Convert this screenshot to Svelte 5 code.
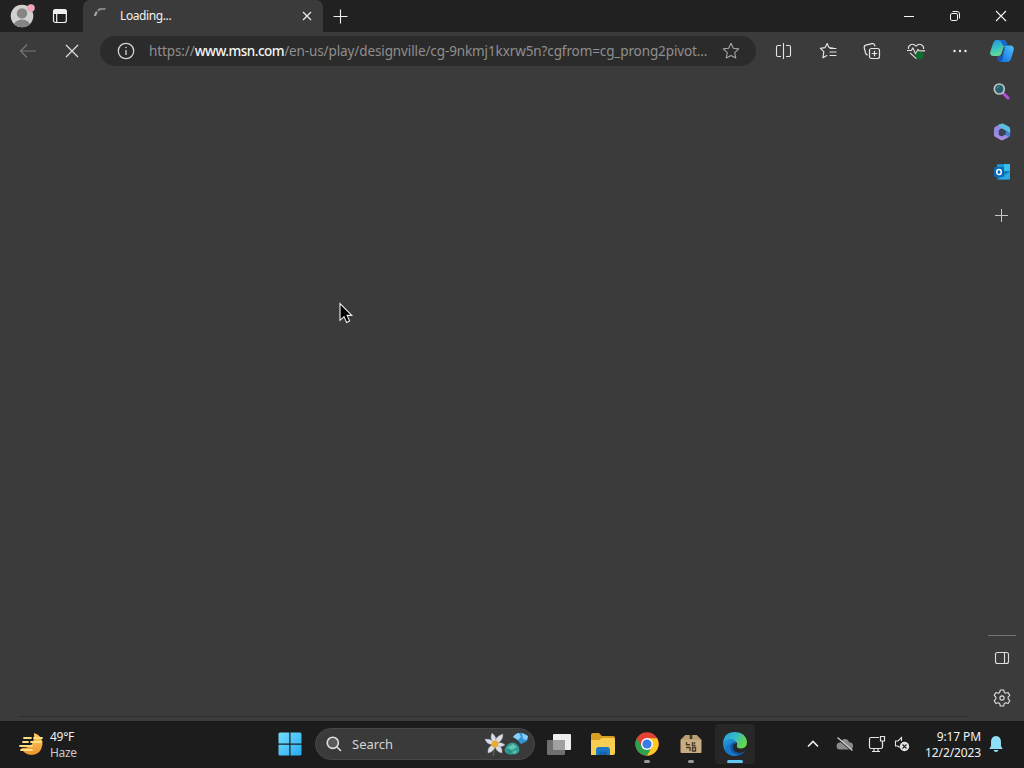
<script>
  const url = {
    scheme: 'https://',
    host: 'www.msn.com',
    path: '/en-us/play/designville/cg-9nkmj1kxrw5n?cgfrom=cg_prong2pivot...',
  };
  const weather = { temp: '49°F', text: 'Haze' };
  const clock = { time: '9:17 PM', date: '12/2/2023' };
</script>

<div class="desktop">
  <header class="titlebar">
    <button class="profile" aria-label="Profile">
      <svg width="28" height="28" viewBox="0 0 28 28">
        <defs><clipPath id="face"><circle cx="14" cy="14" r="11.3" /></clipPath></defs>
        <circle cx="14" cy="14" r="11.3" fill="#d0d0cf" />
        <g clip-path="url(#face)" fill="#858585">
          <circle cx="14" cy="11.4" r="5.2" />
          <ellipse cx="14" cy="23" rx="8" ry="5.4" />
        </g>
        <circle cx="23" cy="6" r="3.8" fill="#f0a6b5" />
      </svg>
    </button>
    <button class="tab-menu" aria-label="Tab actions">
      <svg width="16" height="16" viewBox="0 0 16 16" fill="none" stroke="#f0f0f0" stroke-width="1.2">
        <rect x="1.5" y="1.7" width="12.8" height="12.8" rx="2" />
        <path d="M1.7 3.5q0-1.6 1.8-1.6h9q1.8 0 1.8 1.6v1.8H1.7z" fill="#f0f0f0" />
        <path d="M4.7 5v9.5" />
      </svg>
    </button>
    <div class="tab">
      <svg class="spinner" width="16" height="16" viewBox="0 0 16 16" fill="none" stroke="#a4a4a4" stroke-width="2.2">
        <path d="M1 8A7.5 7.5 0 0 1 3 3.7" />
        <path d="M3.8 2.8A7.5 7.5 0 0 1 11.5 1" stroke="#858585" />
      </svg>
      <span class="tab-title">Loading...</span>
      <svg class="tab-close" width="10" height="10" viewBox="0 0 10 10" stroke="#eee" stroke-width="1.2">
        <path d="M1 1l8 8M9 1L1 9" />
      </svg>
    </div>
    <button class="new-tab" aria-label="New tab">
      <svg width="15" height="15" viewBox="0 0 15 15" stroke="#f0f0f0" stroke-width="1.1"><path d="M7.5 .5v14M.5 7.5h14" /></svg>
    </button>
    <div class="window-buttons">
      <button aria-label="Minimize">
        <svg width="12" height="12" viewBox="0 0 12 12" stroke="#f4f4f4"><path d="M1 6.5h10" /></svg>
      </button>
      <button aria-label="Restore">
        <svg width="12" height="12" viewBox="0 0 12 12" fill="none" stroke="#f4f4f4">
          <rect x="1.5" y="3.5" width="7" height="7" rx="1.4" />
          <path d="M3.5 1.5H8q2.5 0 2.5 2.5v4.5" />
        </svg>
      </button>
      <button aria-label="Close">
        <svg width="12" height="12" viewBox="0 0 12 12" stroke="#f4f4f4" stroke-width="1.1"><path d="M1 1l10 10M11 1L1 11" /></svg>
      </button>
    </div>
  </header>

  <nav class="toolbar">
    <button class="tool" aria-label="Back">
      <svg width="20" height="20" viewBox="0 0 20 20" fill="none" stroke="#777" stroke-width="1.2"><path d="M18 10H2.5M9 3.5L2.5 10l6.5 6.5" /></svg>
    </button>
    <button class="tool" aria-label="Stop">
      <svg width="16" height="16" viewBox="0 0 16 16" stroke="#e2e2e2" stroke-width="1.2"><path d="M2 2l12 12M14 2L2 14" /></svg>
    </button>
    <div class="address">
      <svg class="info" width="18" height="18" viewBox="0 0 18 18" fill="none" stroke="#d5d5d5" stroke-width="1.3">
        <circle cx="9" cy="9" r="7.7" />
        <path d="M9 8v5" />
        <circle cx="9" cy="5.6" r=".5" fill="#d5d5d5" stroke-width=".6" />
      </svg>
      <span class="url">{url.scheme}<b>{url.host}</b>{url.path}</span>
      <svg class="star" width="18" height="18" viewBox="0 0 18 18" fill="none" stroke="#a5a5a5" stroke-width="1.1" stroke-linejoin="round">
        <path d="M9 1.3l2.3 4.9 5.4.7-4 3.7 1.1 5.4L9 13.4 4.2 16l1.1-5.4-4-3.7 5.4-.7z" />
      </svg>
    </div>
    <div class="tools">
      <button class="tool" aria-label="Split screen">
        <svg width="18" height="18" viewBox="0 0 18 18" fill="none" stroke="#e4e4e4" stroke-width="1.1">
          <path d="M8.5 1v16M6 3.5H3Q1.5 3.5 1.5 5v8q0 1.5 1.5 1.5h3M11 3.5h3q1.5 0 1.5 1.5v8q0 1.5-1.5 1.5h-3" />
        </svg>
      </button>
      <button class="tool" aria-label="Favorites">
        <svg width="18" height="18" viewBox="0 0 18 18" fill="none" stroke="#e4e4e4" stroke-width="1.2" stroke-linejoin="round" stroke-linecap="round">
          <path d="M14 6.1L10 5.5 8.1 1.5 6.1 5.6l-4.7.8 3.4 3.2L4 15.8l3.8-2.2" />
          <path d="M11 6.5h6M11 10h6M11 13.5h6" />
        </svg>
      </button>
      <button class="tool" aria-label="Collections">
        <svg width="18" height="18" viewBox="0 0 18 18" fill="none" stroke="#e4e4e4" stroke-width="1.2">
          <rect x="6.5" y="6.5" width="10" height="10" rx="2" />
          <path d="M11.5 8.7v5.6M8.7 11.5h5.6" />
          <path d="M4.8 13Q3 12.8 2.5 11L1.3 6Q.8 3.7 2.8 3.2L9 1.7q2-.4 2.6 1.3l.4 1.4" />
        </svg>
      </button>
      <button class="tool" aria-label="Browser essentials">
        <svg width="18" height="18" viewBox="0 0 18 18" fill="none" stroke="#e4e4e4" stroke-width="1.1" stroke-linejoin="round">
          <path d="M1.5 7C.7 3.5 5.5 0 9 4.2 12.5 0 17.3 3.5 16.5 7M3 10.8l6 5.6 3-2.8" />
          <path d="M0 8.5h4.2l1.7-2.6 2.7 6 2.3-4.5 1.2 1.5H18" />
          <circle cx="12.6" cy="13.4" r="4" fill="#116c30" stroke="none" />
        </svg>
      </button>
      <button class="tool" aria-label="Settings and more">
        <svg width="16" height="4" viewBox="0 0 16 4" fill="#eee"><circle cx="2.5" cy="2" r="1.2" /><circle cx="8" cy="2" r="1.2" /><circle cx="13.5" cy="2" r="1.2" /></svg>
      </button>
    </div>
    <button class="copilot" aria-label="Copilot">
      <svg width="26" height="24" viewBox="0 0 26 24">
        <defs>
          <linearGradient id="cpA" x1="0" y1="0" x2="0.3" y2="1">
            <stop offset="0" stop-color="#278de8" /><stop offset=".5" stop-color="#35bfc2" /><stop offset="1" stop-color="#62dc98" />
          </linearGradient>
          <linearGradient id="cpB" x1="1" y1="0" x2="0" y2="1">
            <stop offset="0" stop-color="#4ec2fa" /><stop offset=".6" stop-color="#258bea" /><stop offset="1" stop-color="#1663cf" />
          </linearGradient>
        </defs>
        <path d="M7.5 1H14q2.5 0 3.3 3l.9 3-3.5 1-2.2 6.5Q11.800 17 9 17H4.500Q.6 17 1.200 13L4 4.500Q5 1 7.500 1z" fill="url(#cpA)" />
        <path d="M9 1h5.500q2.300 0 3 3l.9 3h-4L12.500 4Q11.500 1 9 1z" fill="#1868c9" />
        <path d="M17.500 6.500H21q4.500 0 3.700 4.500l-2.400 8q-1.200 4-4.300 4h-6q-3 0-4-5.200h3q1.800 0 2.600-2.500l2.100-6.500q.5-2.300 1.800-2.300z" fill="url(#cpB)" />
        <path d="M8 17.800h3q1.800 0 2.600-2.300L16 8.300 13.500 20q-.8 3-2.500 2.400Q9 21.500 8 17.800z" fill="#1757be" />
      </svg>
    </button>
  </nav>

  <div class="body">
    <main class="page"></main>
    <aside class="sidebar">
      <button class="side search" aria-label="Search">
        <svg width="18" height="18" viewBox="0 0 18 18" fill="none">
          <path d="M10 10l5 5" stroke="#b44fd8" stroke-width="3" stroke-linecap="round" />
          <circle cx="6.300" cy="6" r="5" fill="#28606f" stroke="#b9c5c7" stroke-width="1.700" />
          <path d="M4 5.500Q4.700 3.500 6.500 3.300" stroke="#4e9baa" />
        </svg>
      </button>
      <button class="side m365" aria-label="Microsoft 365">
        <svg width="18" height="18" viewBox="0 0 18 18">
          <path d="M7 1L2 4Q1 4.700 1 6v6q0 1.500 1.500 2L6 12V7.500L10 5z" fill="#9389de" />
          <path d="M5.500 2L8 .7q1.200-.6 2.500 0L16 3.800q1.200.8 1.200 2.200v4L12 7.500 8 5z" fill="#58bfe0" />
          <path d="M17.200 6v6q0 1.300-1.200 2l-3 1.700L9 13l3.500-2V7.500L17 9.800z" fill="#4b82d0" />
          <path d="M1.200 11.500Q1.500 13.200 2.600 14l5 3q1.400.7 2.800 0l5-3-3.400-2-3 1.500-4.500-2z" fill="#a88de2" />
          <path d="M8.300 5.500l4.200 2v3.700L9 13l-3.200-1.800V7.300z" fill="#374456" />
        </svg>
      </button>
      <button class="side outlook" aria-label="Outlook">
        <svg width="18" height="18" viewBox="0 0 18 18">
          <rect x="4" y="1" width="13" height="15.500" rx="1" fill="#1679bd" />
          <path d="M4 1.500h7V7H4z" fill="#159bd9" /><path d="M11 1h6v7h-6z" fill="#35bfe9" />
          <path d="M4.500 16.500L17 8.500v7q0 1-1 1z" fill="#2aa8e4" />
          <rect x="1" y="4" width="10" height="10" rx="1" fill="#0869b7" />
          <ellipse cx="6" cy="9" rx="2.300" ry="2.600" fill="none" stroke="#fff" stroke-width="1.500" />
        </svg>
      </button>
      <button class="side add" aria-label="Customize">
        <svg width="14" height="13" viewBox="0 0 14 13" stroke="#c6c6c6"><path d="M6.500 0v13M0 6.500h13" /></svg>
      </button>
      <div class="side-bottom">
        <button class="side panel" aria-label="Hide sidebar">
          <svg width="16" height="14" viewBox="0 0 16 14" fill="none" stroke="#dedede" stroke-width="1.100">
            <rect x="1.500" y="1.500" width="13" height="11" rx="2" /><path d="M10.500 1.500v11" />
          </svg>
        </button>
        <button class="side" aria-label="Settings">
          <svg width="18" height="18" viewBox="0 0 18 18" fill="none" stroke="#dedede" stroke-width="1.100" stroke-linejoin="round">
            <path d="M7.300 1h3.400l.6 2.400 1.400.8 2.400-.7 1.700 2.900L15.100 8.200v1.600l1.700 1.800-1.700 2.900-2.400-.7-1.400.8-.6 2.400H7.300l-.6-2.400-1.400-.8-2.400.7-1.700-2.900L2.900 9.800V8.200L1.200 6.400l1.700-2.900 2.400.7 1.400-.8z" />
            <circle cx="9" cy="9" r="2.100" />
          </svg>
        </button>
      </div>
    </aside>
  </div>

  <footer class="taskbar">
    <div class="weather">
      <svg width="26" height="26" viewBox="0 0 26 26">
        <defs><linearGradient id="moon" x1="0" y1="0" x2="0" y2="1"><stop offset="0" stop-color="#ffc95c" /><stop offset="1" stop-color="#ed942f" /></linearGradient></defs>
        <path d="M16 2q9 3 8.500 11.500Q23 23.500 14 24q-8 0-10.500-7Q17 18 16 2z" fill="url(#moon)" />
        <path d="M6 7h7M16 7h8M5 11h5M13 11h10M2 15h12M3 19h11" stroke="#ffdd83" stroke-width="1.800" stroke-linecap="round" />
      </svg>
      <div class="weather-text"><span>{weather.temp}</span><span class="dim">{weather.text}</span></div>
    </div>

    <div class="dock">
      <button class="start" aria-label="Start">
        <svg width="24" height="24" viewBox="0 0 24 24">
          <defs><linearGradient id="win" x1="0" y1="0" x2="1" y2="1"><stop offset="0" stop-color="#74dcfb" /><stop offset="1" stop-color="#28acf3" /></linearGradient></defs>
          <path d="M2 .5h9.300v11H.5V2Q.5.5 2 .5zM12.500.5H22q1.500 0 1.500 1.500v9.500h-11zM.5 12.700h10.800v10.800H2Q.5 23.500.5 22zM12.500 12.700h11V22q0 1.500-1.500 1.500h-9.500z" fill="url(#win)" />
        </svg>
      </button>
      <div class="searchbox">
        <svg width="16" height="16" viewBox="0 0 16 16" fill="none" stroke="#e0e0e0" stroke-width="1.600" stroke-linecap="round">
          <circle cx="6.800" cy="6.800" r="5.600" fill="#5a5a5a" /><path d="M11 11l3.500 3.500" />
        </svg>
        <span>Search</span>
        <svg class="flowers" width="46" height="28" viewBox="0 0 46 28">
          <path d="M10 16q1 5-1 10" stroke="#557a45" fill="none" />
          <g fill="#dcdce5" stroke="#a9abc2" stroke-width=".4">
            <path d="M11 14Q5 9 8 3q6 5 3 11zM11 14q0-8 8-10 0 8-8 10zM11 14q6-3 10 1-6 4-10-1zM11 14q8 2 7 9-7-1-7-9zM11 14q0 8-7 9-1-7 7-9zM11 14q-8 2-10-5 8 0 10 5z" />
          </g>
          <circle cx="11" cy="14" r="3.400" fill="#e9ac32" />
          <path d="M29 7q4-5 10-4l5 3-1 5-6 3q-4-5-8-7z" fill="#3196d8" />
          <path d="M29 7q3-4 6-4l2 4-3 3zM38 3l6 3-1 4-4-1z" fill="#86cef5" />
          <path d="M20.500 20q2-7 8.500-7.500 6 1 6.500 7.500-.5 4.500-7.500 4.500T20.500 20z" fill="#2d9c91" />
          <path d="M23 18l6-4 4 3-5 3zM28 22l5-2-2 4z" fill="#66c6b5" /><path d="M24 18l4 4-4 1z" fill="#258f82" />
        </svg>
      </div>
      <div class="apps">
        <button class="app" aria-label="Task view">
          <svg width="26" height="24" viewBox="0 0 26 24"><rect x="7" y="2" width="18" height="16" rx="1" fill="#eee" /><rect x="1" y="8" width="18" height="15" rx="1" fill="#6f6f6f" /><path d="M7 8h11q1 0 1 1v9H8q-1 0-1-1z" fill="#a0a0a0" /></svg>
        </button>
        <button class="app" aria-label="File Explorer">
          <svg width="26" height="24" viewBox="0 0 26 24">
            <path d="M1 3q0-2 2-2h6l3 3h11q2 0 2 2v7H1z" fill="#d99d22" />
            <path d="M1 8h8l3-2h11q2 0 2 2v13q0 2-2 2H1z" fill="#f8ce51" />
            <path d="M6 18q0-3 3-3h8q3 0 3 3v5H6z" fill="#1b78c6" /><path d="M9 19.500h8V23H9z" fill="#1762a6" />
          </svg>
        </button>
        <button class="app running" aria-label="Chrome">
          <svg width="24" height="24" viewBox="0 0 24 24">
            <circle cx="12" cy="12" r="11.700" fill="#e34234" />
            <path d="M1.900 6.200A11.700 11.700 0 0 0 12 23.700L17 15l-5 2.500L7 15z" fill="#2ba24c" />
            <path d="M12 23.700A11.700 11.700 0 0 0 22.100 6.200H12L17 15z" fill="#fbcb24" />
            <circle cx="12" cy="12" r="6" fill="#fff" /><circle cx="12" cy="12" r="4.600" fill="#387be9" />
          </svg>
        </button>
        <button class="app running" aria-label="Package">
          <svg width="24" height="24" viewBox="0 0 24 24">
            <path d="M1.500 8l5-5h11l5 5v12q0 1-1 1h-19q-1 0-1-1z" fill="#c8ad83" />
            <path d="M1.500 8l5-5h11l5 5z" fill="#bba076" /><path d="M10.700 3h2.600v4h-2.600z" fill="#44372b" />
            <path d="M7.500 10v3.500M8 12.800h3M13.500 10v3.500h3M15.500 10v2M7 15.500h4V19M13.500 15.500V19h3v-3.500z" fill="none" stroke="#4b3d2d" stroke-width="1.400" />
          </svg>
        </button>
        <button class="app active" aria-label="Edge">
          <svg width="26" height="26" viewBox="0 0 26 26">
            <defs>
              <linearGradient id="edgeTop" x1="0" y1="0" x2="1" y2=".4"><stop offset="0" stop-color="#249ddd" /><stop offset=".55" stop-color="#35bbc7" /><stop offset="1" stop-color="#65d84c" /></linearGradient>
              <linearGradient id="edgeLow" x1="0" y1="0" x2="1" y2="1"><stop offset="0" stop-color="#249de0" /><stop offset="1" stop-color="#1551a5" /></linearGradient>
            </defs>
            <path d="M1 12Q2 1 13 1q11 .5 12 10 0 6-6 6.500-5 0-4-3 1-4-4-5-6-.5-10 2.500z" fill="url(#edgeTop)" />
            <path d="M1 12q2-4 7-4 5 .2 6 4-4 1-3 5.500 1.500 4.500 7 4.500 3 0 5-2-4 5-10 5Q1.500 24.500 1 12z" fill="url(#edgeLow)" />
            <path d="M8.500 13q-1 5 2.500 8.500 2 2 5 3-7 1.500-11-3-3.500-6 3.500-8.500z" fill="#1878c7" />
            <path d="M14 12q-4 1-3 5.500 1.500 4.500 7 4.500 3 0 5-2-1 2-3 3-7 1.500-10.500-3-3-6 1.500-8.500z" fill="#12549f" />
          </svg>
        </button>
      </div>
    </div>

    <div class="tray">
      <svg class="caret" width="12" height="8" viewBox="0 0 12 8" fill="none" stroke="#eee" stroke-width="1.600"><path d="M1 6.500l5-5 5 5" /></svg>
      <svg class="cloud" width="18" height="16" viewBox="0 0 18 16">
        <path d="M4 13.500a3.500 3.500 0 0 1 .2-7Q6 2.500 9.500 3q3 .5 3.600 3.300 4 .2 4 3.700-.2 3.500-3.500 3.500z" fill="#8a8a8a" />
        <path d="M2 3l14 12" stroke="#1c1c1c" stroke-width="1.200" /><path d="M1.500 1.500l15 13" stroke="#d0d0d0" stroke-width="1.200" />
      </svg>
      <svg class="network" width="18" height="18" viewBox="0 0 18 18" fill="none" stroke="#e5e5e5" stroke-width="1.200">
        <path d="M11 2.500H3q-1.500 0-1.500 1.500v8q0 1.500 1.500 1.500h10q1.500 0 1.500-1.500V8M6 13.500v3M10 13.500v3M4 16.500h8" />
        <path d="M12.500 1.500h4V6h-4zM14.500 6v3" />
      </svg>
      <svg class="volume" width="16" height="16" viewBox="0 0 16 16" fill="none" stroke="#e5e5e5" stroke-width="1.100">
        <path d="M7.500 5V1.500L4 5H1.500v5H4l1.500 1.500" />
        <circle cx="10.500" cy="10.500" r="4.700" fill="#e5e5e5" stroke="none" /><path d="M8.500 8.500l4 4M12.500 8.500l-4 4" stroke="#222" />
      </svg>
      <div class="clock"><span>{clock.time}</span><span class="date">{clock.date}</span></div>
      <svg class="bell" width="16" height="18" viewBox="0 0 16 18" fill="#8edff7">
        <path d="M8 1Q13 1.500 13 7v4l1.700 3H1.300L3 11V7Q3 1.500 8 1zM5.500 15h5Q10 17 8 17t-2.500-2z" />
      </svg>
    </div>
  </footer>

  <svg class="pointer" width="16" height="22" viewBox="0 0 16 22">
    <path d="M2 1.500v16.800l4-3.700 2.600 5.800 3-1.400-2.500-5.600h4.700z" fill="#000" stroke="#eee" stroke-width="1.100" />
  </svg>
</div>

<style>
  :global(body) { overflow: hidden; background: #3b3b3b; }
  .desktop {
    position: relative; display: flex; flex-direction: column;
    width: 1024px; height: 768px; overflow: hidden;
    background: #3b3b3b; color: #f2f2f2;
    font-family: "Noto Sans", "Open Sans", sans-serif; font-size: 12px;
  }
  button {
    display: flex; align-items: center; justify-content: center;
    padding: 0; border: 0; background: none; color: inherit;
  }
  svg { display: block; flex-shrink: 0; }

  .titlebar { display: flex; height: 32px; background: #212121; }
  .profile { width: 44px; height: 31px; }
  .tab-menu { width: 32px; height: 32px; }
  .tab {
    display: flex; align-items: center; box-sizing: border-box;
    width: 240px; margin-left: 7px; padding: 0 11px;
    background: #3b3b3b; border-radius: 7px 7px 0 0;
  }
  .spinner { margin-right: 10px; }
  .tab-title { padding-bottom: 1px; font-size: 12px; letter-spacing: -0.4px; }
  .tab-close { margin-left: auto; }
  .new-tab { width: 35px; }
  .window-buttons { display: flex; margin-left: auto; }
  .window-buttons button { width: 46px; height: 32px; }

  .toolbar { display: flex; align-items: center; height: 38px; padding-left: 6px; }
  .tool { width: 44px; height: 38px; }
  .address {
    display: flex; align-items: center; box-sizing: border-box;
    width: 656px; height: 30px; margin-left: 6px; padding: 0 16px 0 17px;
    background: #2b2b2b; border-radius: 15px;
  }
  .url {
    margin-left: 14px; padding-bottom: 1px; white-space: nowrap;
    color: #8f8f8f; font-size: 13.5px; letter-spacing: -0.11px;
  }
  .url b { color: #f5f5f5; font-weight: 500; letter-spacing: -0.5px; }
  .star { margin-left: auto; }
  .tools { display: flex; margin-left: 6px; }
  .copilot { width: 40px; height: 38px; }

  .body { display: flex; flex: 1; min-height: 0; }
  .page { flex: 1; margin: 0 12px 4px 18px; border-bottom: 1px solid #303030; }
  .sidebar {
    display: flex; flex-direction: column; align-items: center;
    width: 44px; padding-top: 1px; box-sizing: border-box;
  }
  .side { width: 40px; height: 40px; }
  .search { height: 41px; }
  .add { height: 46px; }
  .side-bottom {
    width: 28px; height: 85px; margin-top: auto;
    border-top: 1px solid #737373;
    display: flex; flex-direction: column; align-items: center;
  }
  .panel { margin-top: 2px; }

  .taskbar {
    display: flex; align-items: center; box-sizing: border-box;
    height: 47px; padding-bottom: 1px; background: #1c1c1c;
  }
  .weather { display: flex; align-items: center; width: 260px; padding-left: 18px; box-sizing: border-box; }
  .weather-text {
    display: flex; flex-direction: column; margin-left: 6px; padding-top: 1px;
    line-height: 16px; font-size: 12px; letter-spacing: -0.3px;
  }
  .dim { color: #c8c8c8; }
  .dock { display: flex; align-items: center; margin-left: 10px; }
  .start { width: 40px; height: 46px; }
  .searchbox {
    display: flex; align-items: center; box-sizing: border-box;
    width: 220px; height: 32px; margin-left: 5px; padding: 0 4px 0 10px;
    background: #3a3a3a; border: 1px solid #474747; border-radius: 16px;
    color: #d4d4d4; font-size: 13px;
  }
  .searchbox span { margin-left: 10px; }
  .flowers { margin-left: auto; }
  .apps { display: flex; align-items: center; margin-left: 2px; }
  .app { position: relative; width: 44px; height: 40px; }
  .active::before {
    content: ''; position: absolute; inset: 0 2px; z-index: -1;
    background: #272727; border-radius: 4px;
  }
  .active { z-index: 0; }
  .running::after, .active::after {
    content: ''; position: absolute; left: 50%; bottom: 1px;
    width: 6px; height: 3px; border-radius: 2px;
    background: #999; transform: translateX(-50%);
  }
  .active::after { width: 16px; background: #60c7f4; }
  .tray { display: flex; align-items: center; margin-left: auto; padding-right: 20px; }
  .cloud { margin-left: 17px; }
  .network { margin-left: 14px; }
  .volume { margin-left: 8px; }
  .clock {
    display: flex; flex-direction: column; align-items: flex-end;
    width: 71px; padding-top: 1px; line-height: 16px; font-size: 12px; letter-spacing: -0.12px;
  }
  .bell { margin-left: 7px; }
  .pointer { position: absolute; left: 338px; top: 302px; }
</style>
